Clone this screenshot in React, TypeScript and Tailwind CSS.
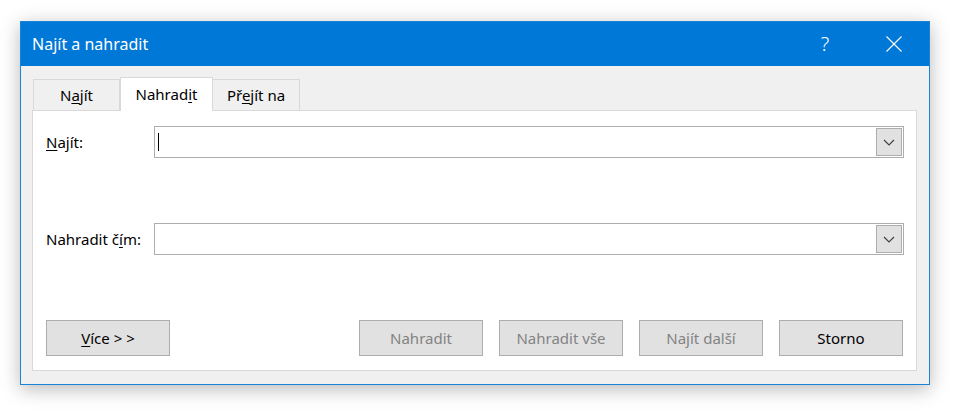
import React from "react";

const font = { fontFamily: '"Segoe UI", "Noto Sans", "Open Sans", sans-serif' };

function Chevron() {
  return (
    <svg width="12" height="7" viewBox="0 0 12 7" fill="none">
      <path d="M1 1 L6 6 L11 1" stroke="#404040" strokeWidth="1.2" />
    </svg>
  );
}

function ComboBox({ cursor }: { cursor?: boolean }) {
  return (
    <div className="flex-1 h-[32px] border border-[#adadad] bg-white flex items-stretch p-[1px]">
      <div className="flex-1 flex items-center pl-[2px]">
        {cursor && <div className="w-[1px] h-[18px] bg-black" />}
      </div>
      <div className="w-[26px] border border-[#adadad] bg-[#e1e1e1] flex items-center justify-center">
        <Chevron />
      </div>
    </div>
  );
}

function Btn({ children, disabled }: { children: React.ReactNode; disabled?: boolean }) {
  return (
    <div
      className={
        "w-[124px] h-[36px] border border-[#adadad] bg-[#e1e1e1] flex items-center justify-center text-[15px] " +
        (disabled ? "text-[#838383]" : "text-black")
      }
    >
      {children}
    </div>
  );
}

export default function App() {
  return (
    <div className="w-[959px] h-[416px] bg-white pt-[21px] pl-[20px]" style={font}>
      <div className="w-[910px] h-[364px] border border-[#1883d7] bg-[#f0f0f0] flex flex-col shadow-[0_4px_18px_rgba(0,0,0,0.28)]">
        {/* title bar */}
        <div className="h-[44px] bg-[#0078d7] flex items-center text-white">
          <div className="pl-[11px] text-[16px] flex-1">Najít a nahradit</div>
          <div className="w-[46px] text-center text-[20px] font-light leading-none mr-[23px]">?</div>
          <div className="w-[46px] flex items-center justify-center mr-[12px]">
            <svg width="16" height="16" viewBox="0 0 16 16">
              <path d="M0.5 0.5 L15.5 15.5 M15.5 0.5 L0.5 15.5" stroke="white" strokeWidth="1.1" />
            </svg>
          </div>
        </div>

        {/* body */}
        <div className="flex-1 flex flex-col pt-[11px] pl-[11px] pr-[12px] pb-[13px]">
          {/* tabs */}
          <div className="h-[33px] flex items-end pl-[1px] relative z-10 text-[15px] text-black">
            <div className="w-[87px] h-[31px] border border-b-0 border-[#d9d9d9] flex items-center justify-center">
              <span>
                N<span className="underline underline-offset-2">a</span>jít
              </span>
            </div>
            <div className="w-[93px] h-[34px] -mb-[1px] border border-b-0 border-[#d9d9d9] bg-white flex items-center justify-center">
              <span>
                Nahrad<span className="underline underline-offset-2">i</span>t
              </span>
            </div>
            <div className="w-[87px] h-[31px] border border-b-0 border-l-0 border-[#d9d9d9] flex items-center justify-center">
              <span>
                Př<span className="underline underline-offset-2">e</span>jít na
              </span>
            </div>
          </div>

          {/* panel */}
          <div className="flex-1 bg-white border border-[#d9d9d9] flex flex-col pt-[15px] pl-[13px] pr-[12px] text-[15px] text-black">
            <div className="flex items-center">
              <div className="w-[108px]">
                <span className="underline underline-offset-2">N</span>ajít:
              </div>
              <ComboBox cursor />
            </div>
            <div className="flex items-center mt-[65px]">
              <div className="w-[108px]">
                Nahradit č<span className="underline underline-offset-2">í</span>m:
              </div>
              <ComboBox />
            </div>
            <div className="flex items-center mt-[65px]">
              <Btn>
                <span>
                  <span className="underline underline-offset-2">V</span>íce &gt; &gt;
                </span>
              </Btn>
              <div className="flex-1" />
              <div className="flex gap-[16px] mr-[1px]">
                <Btn disabled>Nahradit</Btn>
                <Btn disabled>Nahradit vše</Btn>
                <Btn disabled>Najít další</Btn>
                <Btn>Storno</Btn>
              </div>
            </div>
          </div>
        </div>
      </div>
    </div>
  );
}
